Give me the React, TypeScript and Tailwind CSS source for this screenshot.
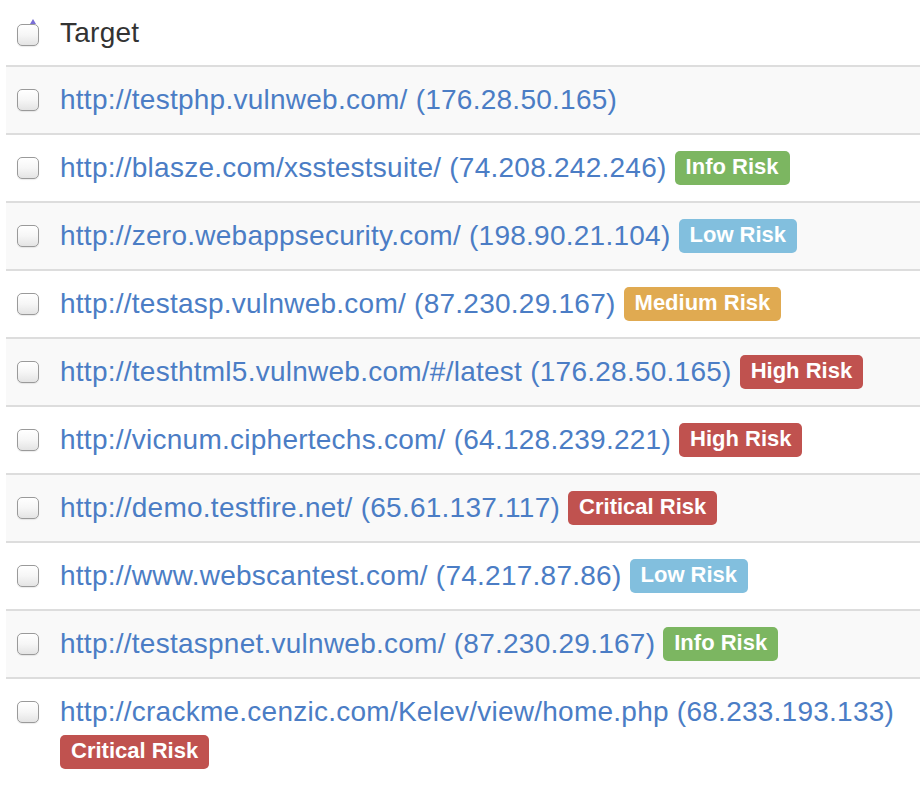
import React from 'react';

type Risk = 'info' | 'low' | 'medium' | 'high' | 'critical';

const targets: { url: string; ip: string; risk?: Risk }[] = [
  { url: 'http://testphp.vulnweb.com/', ip: '176.28.50.165' },
  { url: 'http://blasze.com/xsstestsuite/', ip: '74.208.242.246', risk: 'info' },
  { url: 'http://zero.webappsecurity.com/', ip: '198.90.21.104', risk: 'low' },
  { url: 'http://testasp.vulnweb.com/', ip: '87.230.29.167', risk: 'medium' },
  { url: 'http://testhtml5.vulnweb.com/#/latest', ip: '176.28.50.165', risk: 'high' },
  { url: 'http://vicnum.ciphertechs.com/', ip: '64.128.239.221', risk: 'high' },
  { url: 'http://demo.testfire.net/', ip: '65.61.137.117', risk: 'critical' },
  { url: 'http://www.webscantest.com/', ip: '74.217.87.86', risk: 'low' },
  { url: 'http://testaspnet.vulnweb.com/', ip: '87.230.29.167', risk: 'info' },
  { url: 'http://crackme.cenzic.com/Kelev/view/home.php', ip: '68.233.193.133', risk: 'critical' },
];

const riskStyles: Record<Risk, { label: string; cls: string }> = {
  info: { label: 'Info Risk', cls: 'bg-[#7cb661]' },
  low: { label: 'Low Risk', cls: 'bg-[#82bfde]' },
  medium: { label: 'Medium Risk', cls: 'bg-[#e0aa51]' },
  high: { label: 'High Risk', cls: 'bg-[#c0524f]' },
  critical: { label: 'Critical Risk', cls: 'bg-[#c0524f]' },
};

function Checkbox() {
  return (
    <div className="w-[22px] h-[22px] shrink-0 rounded-[5px] border border-[#9a9a9a] bg-gradient-to-b from-white via-[#f6f6f6] to-[#e4e4e4] shadow-[inset_0_1px_0_#fff,0_1px_1px_rgba(0,0,0,0.08)]" />
  );
}

export default function App() {
  return (
    <div className="min-h-[790px] w-[920px] bg-white font-['Liberation_Sans',Arial,sans-serif] overflow-hidden">
      <div className="ml-[6px]">
        {/* header */}
        <div className="flex items-start pl-[11px] pt-[13px] pb-[12px] border-b-2 border-[#dddddd]">
          <div className="relative mt-[11px]">
            <div className="absolute left-[13px] -top-[5px] w-0 h-0 border-l-[3px] border-r-[3px] border-b-[5px] border-l-transparent border-r-transparent border-b-[#7a6fd6]" />
            <Checkbox />
          </div>
          <span className="ml-[21px] text-[28px] leading-[40px] tracking-[0.25px] text-[#333333]">Target</span>
        </div>

        {targets.map((t, i) => {
          const risk = t.risk ? riskStyles[t.risk] : null;
          const last = i === targets.length - 1;
          return (
            <div
              key={t.url}
              className={`flex items-start pl-[11px] pr-[20px] py-[13px] ${last ? '' : 'border-b-2 border-[#dddddd]'} ${
                i % 2 === 0 ? 'bg-[#f9f9f9]' : 'bg-white'
              }`}
            >
              <div className="mt-[9px]">
                <Checkbox />
              </div>
              <div className="ml-[21px] text-[28px] leading-[40px] tracking-[0.25px] text-[#4b7dc5]">
                {t.url} ({t.ip}){' '}
                {risk && (
                  <span
                    className={`inline-block align-[3px] rounded-[5px] px-[11px] pt-[5px] pb-[7px] text-[22px] leading-[22px] tracking-normal font-bold text-white ${risk.cls}`}
                  >
                    {risk.label}
                  </span>
                )}
              </div>
            </div>
          );
        })}
      </div>
    </div>
  );
}
